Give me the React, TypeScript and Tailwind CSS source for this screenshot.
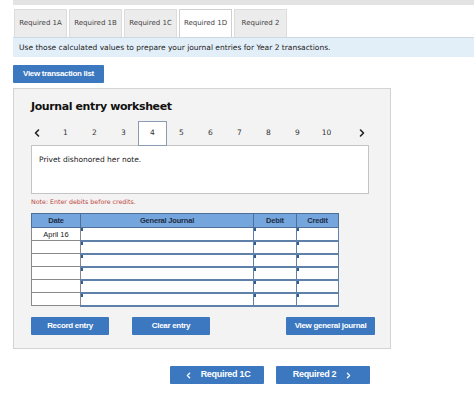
import { ChevronLeft, ChevronRight } from 'lucide-react';

const tabs = ['Required 1A', 'Required 1B', 'Required 1C', 'Required 1D', 'Required 2'];
const steps = ['1', '2', '3', '4', '5', '6', '7', '8', '9', '10'];
const rows = ['April 16', '', '', '', '', ''];

const verdana = { fontFamily: '"DejaVu Sans", Verdana, sans-serif' };

function BlueButton({ children, className = '' }: { children: React.ReactNode; className?: string }) {
  return (
    <button
      className={`flex items-center justify-center gap-2 rounded-[1px] bg-[#3b78bf] font-['Liberation_Sans',Arial,sans-serif] text-[8px] font-bold tracking-[-0.3px] text-white ${className}`}
    >
      {children}
    </button>
  );
}

function InputCell() {
  return (
    <td className="relative border border-[#5f80a8] border-b-2 bg-white p-0">
      <span className="absolute left-0 top-0 h-[3px] w-[2px] bg-[#2f5d94]" />
    </td>
  );
}

export default function App() {
  return (
    <div className="h-[414px] w-[474px] overflow-hidden bg-white pl-[13px]" style={verdana}>
      {/* top strip */}
      <div className="h-[5px] bg-[#e3e3e3]" />

      {/* tabs */}
      <div className="mt-[4px] flex gap-[2px] pl-[1px]">
        {tabs.map((t) => (
          <div
            key={t}
            className={`flex h-[28px] w-[53px] items-center justify-center border border-b-0 text-[7px] text-[#444] ${
              t === 'Required 1D' ? 'border-[#cfcfcf] bg-white' : 'border-[#dcdcdc] bg-[#ececec]'
            }`}
          >
            {t}
          </div>
        ))}
      </div>

      {/* instruction band */}
      <div className="flex h-[20px] items-center border-t border-[#cfd9e3] bg-[#e2eef8] pl-[6px] text-[7.5px] text-[#222]">
        Use those calculated values to prepare your journal entries for Year 2 transactions.
      </div>

      <BlueButton className="mt-[8px] h-[18px] w-[91px] text-[7px]">View transaction list</BlueButton>

      {/* worksheet panel */}
      <div className="mt-[5px] h-[261px] w-[378px] border border-[#d3d3d3] bg-[#f3f3f3] pl-[17px] pt-[9px]">
        <div className="text-[11px] font-bold leading-[18px] tracking-[-0.4px] text-[#111]">
          Journal entry worksheet
        </div>

        {/* step navigation */}
        <div className="mt-[5px] flex h-[24px] w-[338px] items-center text-[7.5px] text-[#333]">
          <div className="w-[20px]">
            <ChevronLeft size={12} strokeWidth={3.2} className="text-[#222]" />
          </div>
          {steps.map((s) => (
            <div
              key={s}
              className={`flex w-[29px] items-center justify-center ${
                s === '4' ? 'relative z-10 h-[25px] border border-[#8d9bb0] bg-white' : 'h-[24px]'
              }`}
            >
              {s}
            </div>
          ))}
          <div className="ml-auto pr-[1px]">
            <ChevronRight size={12} strokeWidth={3.2} className="text-[#222]" />
          </div>
        </div>

        {/* description */}
        <div className="h-[49px] w-[338px] border border-[#c4c4c4] bg-white px-[7px] pt-[8px] text-[7.5px] text-[#222]">
          Privet dishonored her note.
        </div>

        <div className="mt-[3px] text-[6.3px] text-[#c0433b]">Note: Enter debits before credits.</div>

        {/* journal table */}
        <table className="mt-[7px] w-[307px] table-fixed border-collapse font-['Liberation_Sans',Arial,sans-serif] text-[7.5px]">
          <colgroup>
            <col className="w-[49px]" />
            <col className="w-[173px]" />
            <col className="w-[43px]" />
            <col className="w-[42px]" />
          </colgroup>
          <thead>
            <tr className="h-[14px] bg-[#74a5dc] text-[#1d2c44]">
              {['Date', 'General Journal', 'Debit', 'Credit'].map((h) => (
                <th key={h} className="border border-[#4d6f98] p-0 font-bold tracking-[-0.2px]">
                  {h}
                </th>
              ))}
            </tr>
          </thead>
          <tbody>
            {rows.map((d, i) => (
              <tr key={i} className="h-[13px]">
                <td className="border border-[#8a8a8a] bg-white p-0 text-center text-[#222]">{d}</td>
                <InputCell />
                <InputCell />
                <InputCell />
              </tr>
            ))}
          </tbody>
        </table>

        {/* entry actions */}
        <div className="mt-[10px] flex w-[344px]">
          <BlueButton className="h-[18px] w-[78px]">Record entry</BlueButton>
          <BlueButton className="ml-[23px] h-[18px] w-[78px]">Clear entry</BlueButton>
          <BlueButton className="ml-auto h-[18px] w-[89px]">View general journal</BlueButton>
        </div>
      </div>

      {/* bottom navigation */}
      <div className="mt-[17px] flex gap-[12px] pl-[157px]">
        <BlueButton className="h-[18px] w-[94px] text-[9px]">
          <ChevronLeft size={9} strokeWidth={3.5} />
          <span>Required 1C</span>
        </BlueButton>
        <BlueButton className="h-[18px] w-[94px] text-[9px]">
          <span>Required 2</span>
          <ChevronRight size={9} strokeWidth={3.5} />
        </BlueButton>
      </div>
    </div>
  );
}
